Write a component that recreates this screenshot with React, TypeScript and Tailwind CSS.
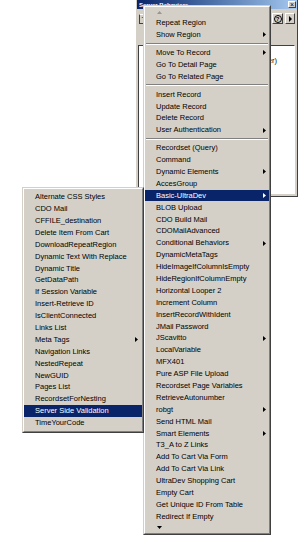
import React from 'react';

type Item = { label: string; sub?: boolean; active?: boolean } | 'sep';

const mainItems: Item[] = [
  { label: 'Repeat Region' },
  { label: 'Show Region', sub: true },
  'sep',
  { label: 'Move To Record', sub: true },
  { label: 'Go To Detail Page' },
  { label: 'Go To Related Page' },
  'sep',
  { label: 'Insert Record' },
  { label: 'Update Record' },
  { label: 'Delete Record' },
  { label: 'User Authentication', sub: true },
  'sep',
  { label: 'Recordset (Query)' },
  { label: 'Command' },
  { label: 'Dynamic Elements', sub: true },
  { label: 'AccesGroup' },
  { label: 'Basic-UltraDev', sub: true, active: true },
  { label: 'BLOB Upload' },
  { label: 'CDO Build Mail' },
  { label: 'CDOMailAdvanced' },
  { label: 'Conditional Behaviors', sub: true },
  { label: 'DynamicMetaTags' },
  { label: 'HideImageIfColumnIsEmpty' },
  { label: 'HideRegionIfColumnEmpty' },
  { label: 'Horizontal Looper 2' },
  { label: 'Increment Column' },
  { label: 'InsertRecordWithIdent' },
  { label: 'JMail Password' },
  { label: 'JScavitto', sub: true },
  { label: 'LocalVariable' },
  { label: 'MFX401' },
  { label: 'Pure ASP File Upload' },
  { label: 'Recordset Page Variables' },
  { label: 'RetrieveAutonumber' },
  { label: 'robgt', sub: true },
  { label: 'Send HTML Mail' },
  { label: 'Smart Elements', sub: true },
  { label: 'T3_A to Z Links' },
  { label: 'Add To Cart Via Form' },
  { label: 'Add To Cart Via Link' },
  { label: 'UltraDev Shopping Cart' },
  { label: 'Empty Cart' },
  { label: 'Get Unique ID From Table' },
  { label: 'Redirect If Empty' },
];

const subItems: Item[] = [
  { label: 'Alternate CSS Styles' },
  { label: 'CDO Mail' },
  { label: 'CFFILE_destination' },
  { label: 'Delete Item From Cart' },
  { label: 'DownloadRepeatRegion' },
  { label: 'Dynamic Text With Replace' },
  { label: 'Dynamic Title' },
  { label: 'GetDataPath' },
  { label: 'If Session Variable' },
  { label: 'Insert-Retrieve ID' },
  { label: 'IsClientConnected' },
  { label: 'Links List' },
  { label: 'Meta Tags', sub: true },
  { label: 'Navigation Links' },
  { label: 'NestedRepeat' },
  { label: 'NewGUID' },
  { label: 'Pages List' },
  { label: 'RecordsetForNesting' },
  { label: 'Server Side Validation', active: true },
  { label: 'TimeYourCode' },
];

const SubArrow = () => (
  <svg width="3" height="5" viewBox="0 0 3 5" className="shrink-0">
    <path d="M0 0L3 2.5L0 5Z" fill="currentColor" />
  </svg>
);

const ScrollArrow = ({ up }: { up?: boolean }) => (
  <div className="flex h-[9px] items-center pl-[12px]">
    <svg width="5" height="3" viewBox="0 0 5 3">
      {up ? (
        <path d="M0 3L2.5 0L5 3Z" fill="#9a968e" />
      ) : (
        <path d="M0 0L2.5 3L5 0Z" fill="#000" />
      )}
    </svg>
  </div>
);

const MenuRows = ({ items, right }: { items: Item[]; right: string }) => (
  <>
    {items.map((it, i) =>
      it === 'sep' ? (
        <div key={i} className="flex h-[6px] flex-col justify-center px-[1px]">
          <div className="h-px bg-[#808080]" />
          <div className="h-px bg-white" />
        </div>
      ) : (
        <div
          key={i}
          className={`flex h-[11.9px] items-center justify-between pl-[11px] ${right} ${
            it.active ? 'bg-[#0a246a] text-white' : 'text-black'
          }`}
        >
          <span className="whitespace-nowrap leading-none">{it.label}</span>
          {it.sub && <SubArrow />}
        </div>
      )
    )}
  </>
);

const App: React.FC = () => {
  return (
    <div className="relative h-[537px] w-[299px] overflow-hidden bg-white font-['Liberation_Sans',Arial,sans-serif] text-[7.5px]">
      {/* panel window behind the menus */}
      <div className="absolute left-[136px] top-0 flex h-[197px] w-[162px] flex-col border border-t-0 border-l-[#d4d0c8] border-r-[#404040] border-b-[#404040] bg-[#d4d0c8]">
        <div className="flex h-[9px] items-center justify-between bg-gradient-to-r from-[#0a246a] to-[#a6caf0] pl-[2px] pr-[1px]">
          <span className="text-[6px] font-bold leading-none text-white">Server Behaviors</span>
          <div className="flex h-[7px] w-[8px] items-center justify-center border border-t-white border-l-white border-r-[#404040] border-b-[#404040] bg-[#d4d0c8] text-[7px] leading-none text-black">
            ×
          </div>
        </div>
        <div className="flex h-[36px] flex-col">
          <div className="mt-[4px] flex items-center justify-between pl-[2px] pr-[2px]">
            <div className="flex h-[10px] w-[10px] items-center justify-center border border-t-white border-l-[#404040] border-r-[#404040] border-b-[#404040] text-[9px] leading-none">
              +
            </div>
            <div className="flex gap-[2px]">
              <div className="flex h-[11px] w-[11px] items-center justify-center border border-t-white border-l-white border-r-[#404040] border-b-[#404040]">
                <div className="flex h-[8px] w-[8px] items-center justify-center rounded-full border border-black text-[6px] font-bold leading-none">
                  ?
                </div>
              </div>
              <div className="flex h-[11px] w-[10px] items-center justify-center border border-t-white border-l-white border-r-[#404040] border-b-[#404040]">
                <svg width="3" height="6" viewBox="0 0 3 6">
                  <path d="M0 0L3 3L0 6Z" fill="#000" />
                </svg>
              </div>
            </div>
          </div>
        </div>
        <div className="mb-[2px] ml-[1px] mr-[2px] flex flex-1 flex-col border border-t-[#404040] border-l-[#404040] border-r-white border-b-white bg-white">
          <div className="flex justify-end pr-[17px] pt-[11px] leading-none">
            <span className="whitespace-nowrap">+ Recordset (rsUser)</span>
          </div>
        </div>
      </div>

      {/* main context menu */}
      <div className="absolute left-[143px] top-[5px] w-[128px] border border-t-[#d4d0c8] border-l-[#d4d0c8] border-r-[#404040] border-b-[#404040]">
        <div className="flex flex-col border border-t-white border-l-white border-r-[#808080] border-b-[#808080] bg-[#d4d0c8] py-px">
          <ScrollArrow up />
          <MenuRows items={mainItems} right="pr-[3px]" />
          <ScrollArrow />
        </div>
      </div>

      {/* Basic-UltraDev submenu */}
      <div className="absolute left-[22px] top-[187px] w-[122px] border border-t-[#d4d0c8] border-l-[#d4d0c8] border-r-[#404040] border-b-[#404040]">
        <div className="flex flex-col border border-t-white border-l-white border-r-[#808080] border-b-[#808080] bg-[#d4d0c8] py-[2px]">
          <MenuRows items={subItems} right="pr-[4px]" />
        </div>
      </div>
    </div>
  );
};

export default App;
